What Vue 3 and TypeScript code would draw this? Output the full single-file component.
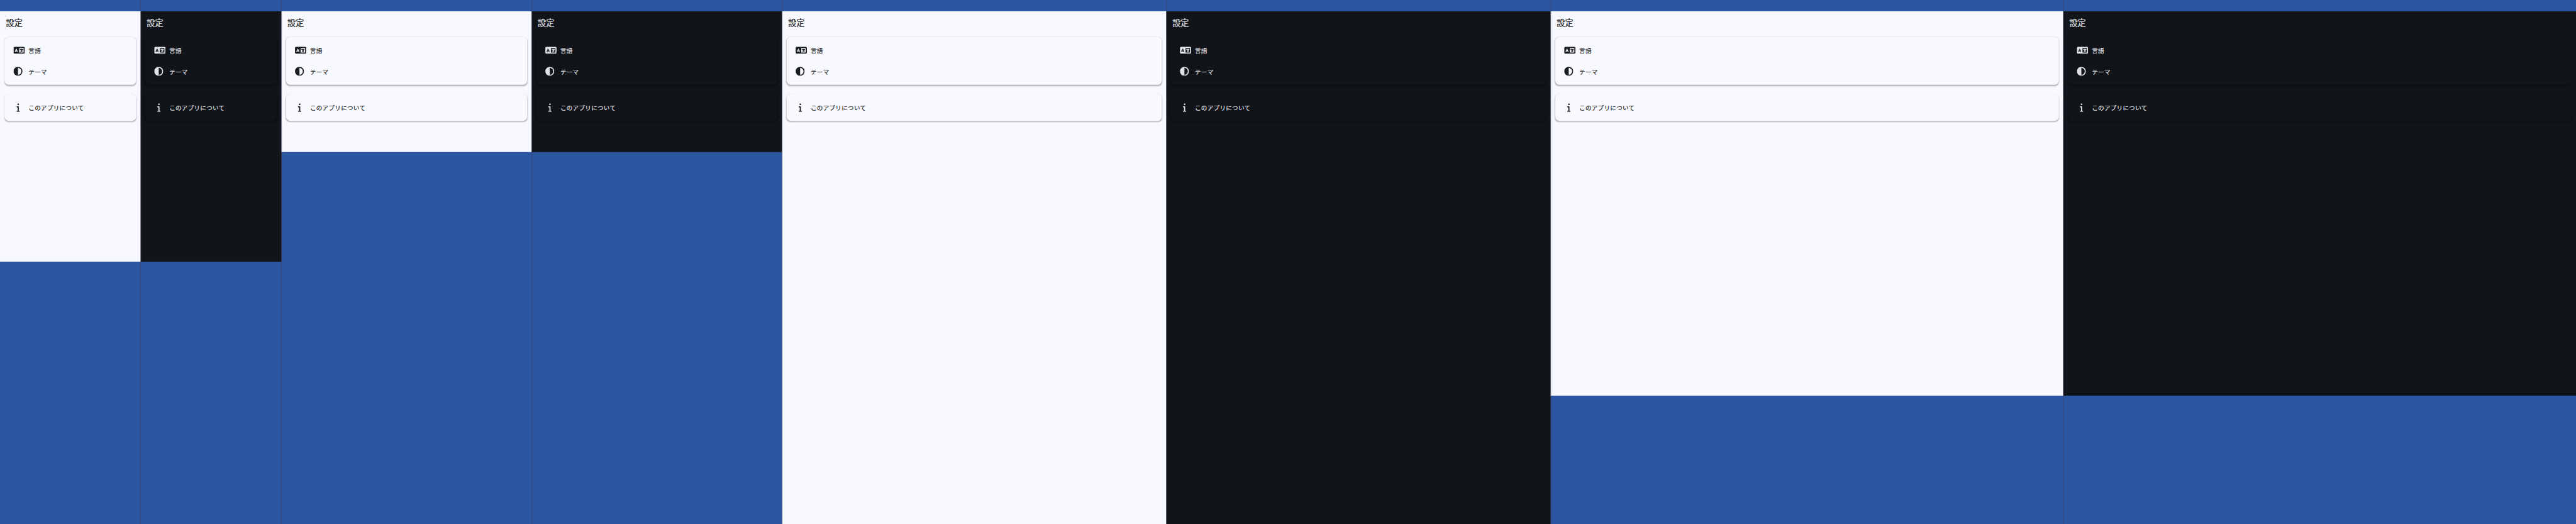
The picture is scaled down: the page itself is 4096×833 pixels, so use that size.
<script setup lang="ts">
interface Device {
  id: string
  size: string
  theme: 'light' | 'dark'
}

const sizes = ['phone', 'phone-wide', 'tablet', 'tablet-wide']
const devices: Device[] = sizes.flatMap((size) => [
  { id: `${size}-light`, size, theme: 'light' as const },
  { id: `${size}-dark`, size, theme: 'dark' as const },
])
</script>

<template>
  <div class="viewport">
    <main class="board">
      <section v-for="d in devices" :key="d.id" class="device" :class="[d.size, d.theme]">
        <div class="screen">
          <h1 class="title">設定</h1>
          <div class="card">
            <div class="row">
              <span class="icon">
                <svg class="wide" viewBox="0 0 640 512" fill="currentColor">
                  <path d="M0 128C0 92.7 28.7 64 64 64l192 0 48 0 16 0 256 0c35.3 0 64 28.7 64 64l0 256c0 35.3-28.7 64-64 64l-256 0-16 0-48 0L64 448c-35.3 0-64-28.7-64-64L0 128zm320 0l0 256 256 0 0-256-256 0zM178.3 175.9c-3.2-7.2-10.4-11.9-18.3-11.9s-15.1 4.7-18.3 11.9l-64 144c-4.5 10.1 .1 21.9 10.2 26.4s21.9-.1 26.4-10.2l8.9-20.1 73.6 0 8.9 20.1c4.5 10.1 16.3 14.7 26.4 10.2s14.7-16.3 10.2-26.4l-64-144zM160 233.2L179 276l-38 0 19-42.8zM448 164c11 0 20 9 20 20l0 4 44 0 16 0c11 0 20 9 20 20s-9 20-20 20l-2 0-1.6 4.5c-8.9 24.4-22.4 46.6-39.6 65.4c.9 .6 1.8 1.1 2.7 1.6l18.9 11.3c9.5 5.7 12.5 18 6.9 27.4s-18 12.5-27.4 6.9l-18.9-11.3c-4.5-2.7-8.8-5.5-13.1-8.5c-10.6 7.5-21.9 14-34 19.4l-3.6 1.6c-10.1 4.5-21.9-.1-26.4-10.2s.1-21.9 10.2-26.4l3.6-1.6c6.4-2.9 12.6-6.1 18.5-9.8l-12.2-12.2c-7.8-7.8-7.8-20.5 0-28.3s20.5-7.8 28.3 0l14.6 14.6 .5 .5c12.4-13.1 22.5-28.3 29.8-45L448 228l-72 0c-11 0-20-9-20-20s9-20 20-20l52 0 0-4c0-11 9-20 20-20z" />
                </svg>
              </span>
              <span class="label">言語</span>
            </div>
            <div class="row">
              <span class="icon">
                <svg class="square" viewBox="0 0 512 512" fill="currentColor">
                  <path d="M448 256c0-106-86-192-192-192l0 384c106 0 192-86 192-192zM0 256a256 256 0 1 1 512 0A256 256 0 1 1 0 256z" />
                </svg>
              </span>
              <span class="label">テーマ</span>
            </div>
          </div>
          <div class="card">
            <div class="row">
              <span class="icon centered">
                <svg class="narrow" viewBox="0 0 192 512" fill="currentColor">
                  <path d="M48 80a48 48 0 1 1 96 0A48 48 0 1 1 48 80zM0 224c0-17.7 14.3-32 32-32l64 0c17.7 0 32 14.3 32 32l0 224 32 0c17.7 0 32 14.3 32 32s-14.3 32-32 32L32 512c-17.7 0-32-14.3-32-32s14.3-32 32-32l32 0 0-192-32 0c-17.7 0-32-14.3-32-32z" />
                </svg>
              </span>
              <span class="label">このアプリについて</span>
            </div>
          </div>
        </div>
      </section>
    </main>
  </div>
</template>

<style>
body {
  margin: 0;
  background: #2b55a1;
}
</style>

<style scoped>
.viewport {
  width: 100vw;
  height: 100vh;
  overflow: hidden;
}

.board {
  display: flex;
  width: 6864px;
  height: 1396px;
  background: #2b55a1;
  transform: scale(0.596737);
  transform-origin: 0 0;
  font-family: "Noto Sans CJK JP", "Noto Sans", sans-serif;
}

.device {
  position: relative;
  flex: none;
  box-sizing: border-box;
  height: 1396px;
  padding-top: 30px;
}

/* Translucent hairline frame laid over each device's left and right edge */
.device::after {
  content: "";
  position: absolute;
  inset: 0;
  border: solid rgba(73, 60, 80, 0.5);
  border-width: 0 1px;
}

.device:first-child::after {
  border-left-width: 0;
}

.device:last-child::after {
  border-right-width: 0;
}

.screen {
  box-sizing: border-box;
  padding: 0 12px;
  overflow: hidden;
}

.phone { width: 375px; }
.phone .screen { height: 667px; }
.phone-wide { width: 667px; }
.phone-wide .screen { height: 375px; }
.tablet { width: 1024px; }
.tablet .screen { height: 1366px; }
.tablet-wide { width: 1366px; }
.tablet-wide .screen { height: 1024px; }

.light .screen {
  background: #f8f9ff;
  color: #191c20;
}

.dark .screen {
  background: #111418;
  color: #e1e2e8;
}

.title {
  margin: 0 0 12px;
  padding: 0 4px;
  height: 56px;
  line-height: 56px;
  font-size: 22px;
  font-weight: 400;
  -webkit-text-stroke: 0.4px currentColor;
}

.card {
  margin-bottom: 24px;
  padding: 8px 0;
  border-radius: 12px;
  box-shadow:
    0 2px 3px rgba(0, 0, 0, 0.28),
    0 0 1px rgba(0, 0, 0, 0.04);
}

.light .card { background: #f8f9ff; }
.dark .card { background: #111418; }

.row {
  display: flex;
  align-items: center;
  gap: 16px;
  height: 56px;
  padding: 0 24px;
}

.icon {
  display: flex;
  flex: none;
  width: 24px;
  height: 24px;
}

.centered { justify-content: center; }

svg {
  display: block;
  flex: none;
  height: 24px;
}

.wide { width: 30px; }
.square { width: 24px; }
.narrow { width: 9px; }

.label {
  font-size: 16px;
  line-height: 24px;
  letter-spacing: 0.5px;
  white-space: nowrap;
  -webkit-text-stroke: 0.3px currentColor;
}
</style>
